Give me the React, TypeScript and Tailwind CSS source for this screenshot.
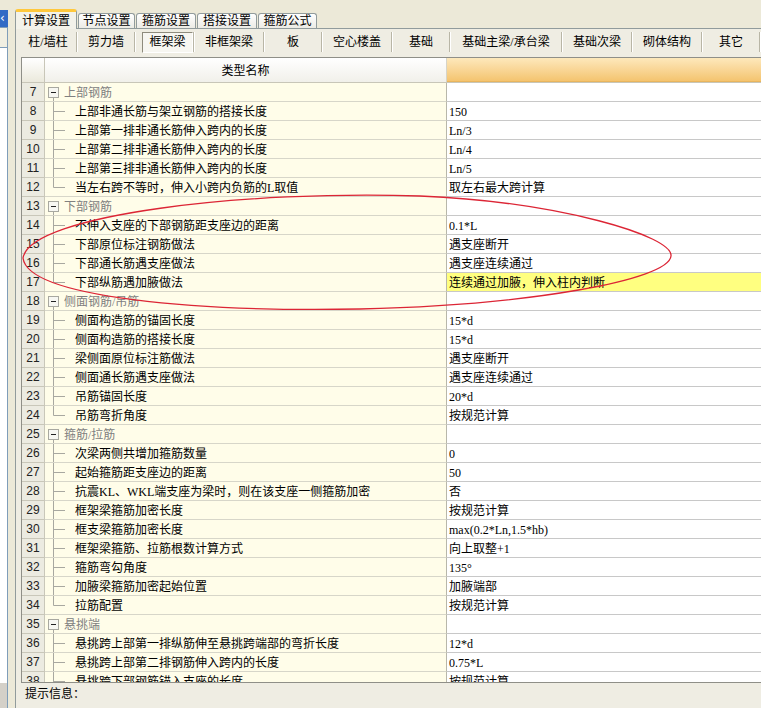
import React from "react";

type Row = { n: number; name: string; v?: string; g?: boolean; hl?: boolean };

const rows: Row[] = [
  { n: 7, name: "上部钢筋", g: true },
  { n: 8, name: "上部非通长筋与架立钢筋的搭接长度", v: "150" },
  { n: 9, name: "上部第一排非通长筋伸入跨内的长度", v: "Ln/3" },
  { n: 10, name: "上部第二排非通长筋伸入跨内的长度", v: "Ln/4" },
  { n: 11, name: "上部第三排非通长筋伸入跨内的长度", v: "Ln/5" },
  { n: 12, name: "当左右跨不等时，伸入小跨内负筋的L取值", v: "取左右最大跨计算" },
  { n: 13, name: "下部钢筋", g: true },
  { n: 14, name: "不伸入支座的下部钢筋距支座边的距离", v: "0.1*L" },
  { n: 15, name: "下部原位标注钢筋做法", v: "遇支座断开" },
  { n: 16, name: "下部通长筋遇支座做法", v: "遇支座连续通过" },
  { n: 17, name: "下部纵筋遇加腋做法", v: "连续通过加腋，伸入柱内判断", hl: true },
  { n: 18, name: "侧面钢筋/吊筋", g: true },
  { n: 19, name: "侧面构造筋的锚固长度", v: "15*d" },
  { n: 20, name: "侧面构造筋的搭接长度", v: "15*d" },
  { n: 21, name: "梁侧面原位标注筋做法", v: "遇支座断开" },
  { n: 22, name: "侧面通长筋遇支座做法", v: "遇支座连续通过" },
  { n: 23, name: "吊筋锚固长度", v: "20*d" },
  { n: 24, name: "吊筋弯折角度", v: "按规范计算" },
  { n: 25, name: "箍筋/拉筋", g: true },
  { n: 26, name: "次梁两侧共增加箍筋数量", v: "0" },
  { n: 27, name: "起始箍筋距支座边的距离", v: "50" },
  { n: 28, name: "抗震KL、WKL端支座为梁时，则在该支座一侧箍筋加密", v: "否" },
  { n: 29, name: "框架梁箍筋加密长度", v: "按规范计算" },
  { n: 30, name: "框支梁箍筋加密长度", v: "max(0.2*Ln,1.5*hb)" },
  { n: 31, name: "框架梁箍筋、拉筋根数计算方式", v: "向上取整+1" },
  { n: 32, name: "箍筋弯勾角度", v: "135°" },
  { n: 33, name: "加腋梁箍筋加密起始位置", v: "加腋端部" },
  { n: 34, name: "拉筋配置", v: "按规范计算" },
  { n: 35, name: "悬挑端", g: true },
  { n: 36, name: "悬挑跨上部第一排纵筋伸至悬挑跨端部的弯折长度", v: "12*d" },
  { n: 37, name: "悬挑跨上部第二排钢筋伸入跨内的长度", v: "0.75*L" },
  { n: 38, name: "悬挑跨下部钢筋锚入支座的长度", v: "按规范计算" },
];

const subTabs: { label: string; w: string; active?: boolean }[] = [
  { label: "柱/墙柱", w: "w-[58px]" },
  { label: "剪力墙", w: "w-[58px]" },
  { label: "框架梁", w: "w-[59px]", active: true },
  { label: "非框架梁", w: "w-[70px]" },
  { label: "板", w: "w-[58px]" },
  { label: "空心楼盖", w: "w-[70px]" },
  { label: "基础", w: "w-[58px]" },
  { label: "基础主梁/承台梁", w: "w-[112px]" },
  { label: "基础次梁", w: "w-[70px]" },
  { label: "砌体结构", w: "w-[70px]" },
  { label: "其它", w: "w-[58px]" },
];

const tabs: { label: string; w: string }[] = [
  { label: "节点设置", w: "w-[57px]" },
  { label: "箍筋设置", w: "w-[60px]" },
  { label: "搭接设置", w: "w-[60px]" },
  { label: "箍筋公式", w: "w-[59px]" },
];

const FONT = '"Liberation Serif","Noto Sans CJK SC",serif';

function GroupIcon() {
  return (
    <svg width="19" height="18" className="shrink-0">
      <rect x="3.5" y="4.5" width="10" height="10" fill="#f7f7f2" stroke="#a8a8a0" />
      <line x1="6" y1="9.5" x2="11" y2="9.5" stroke="#222" />
      <line x1="8.5" y1="15" x2="8.5" y2="18" stroke="#a8a8a0" />
    </svg>
  );
}

function TreeIcon({ last }: { last: boolean }) {
  return (
    <svg width="30" height="18" className="shrink-0">
      <line x1="8.5" y1="0" x2="8.5" y2={last ? 9.5 : 18} stroke="#a8a8a0" />
      <line x1="8.5" y1="9.5" x2="20" y2="9.5" stroke="#a8a8a0" />
    </svg>
  );
}

export default function App() {
  return (
    <div
      className="relative w-[761px] h-[708px] bg-[#ece9d8] flex overflow-hidden text-[12px] text-black"
      style={{ fontFamily: FONT }}
    >
      {/* left strip */}
      <div className="w-[8px] flex flex-col shrink-0">
        <div className="h-[10px]" />
        <div className="h-[17px] bg-[#316ac5] text-white text-[12px] leading-[17px] overflow-hidden" style={{ fontFamily: '"DejaVu Sans",sans-serif' }}>
          ‹
        </div>
        <div className="h-[21px] bg-[#f1efe2] border-y border-r border-[#7f9db9]" />
        <div className="flex-1 bg-white border-r border-[#7f9db9]" />
        <div className="h-[25px] bg-[#d4d0c8] border-r border-[#7f9db9]" />
      </div>
      <div className="w-[7px] shrink-0" />

      {/* main */}
      <div className="flex-1 min-w-0 flex flex-col">
        {/* tabs */}
        <div className="h-[28px] flex items-end shrink-0">
          <div className="relative z-10 -mb-[1px] h-[20px] w-[62px] bg-[#f3f2ea] border-x border-[#919b9c] rounded-t-[3px] border-t-[3px] border-t-[#ffc83c] flex items-center justify-center leading-[14px]">
            计算设置
          </div>
          {tabs.map((t) => (
            <div
              key={t.label}
              className={`${t.w} h-[15px] ml-[1px] bg-linear-to-b from-[#ffffff] to-[#ecebe5] border-x border-t border-[#919b9c] rounded-t-[3px] flex items-center justify-center leading-[14px]`}
            >
              {t.label}
            </div>
          ))}
        </div>

        {/* panel */}
        <div className="flex-1 min-h-0 border-l border-t border-[#919b9c] bg-[#efede3] flex flex-col pl-[5px]">
          {/* sub tabs */}
          <div className="mt-[2px] h-[22px] flex ml-[-1px] shrink-0">
            {subTabs.map((s) => (
              <div key={s.label} className={`${s.w} shrink-0 flex items-center`}>
                {s.active ? (
                  <div className="flex-1 ml-[6px] h-[21px] flex items-center justify-center border border-t-[#8e8b7d] border-l-[#8e8b7d] border-b-white border-r-white bg-[#f7f6f1]">
                    {s.label}
                  </div>
                ) : (
                  <div className="flex-1 text-center leading-[20px] whitespace-nowrap">{s.label}</div>
                )}
                <div className="w-[2px] h-[20px] border-l border-[#b9b6a6] bg-white shrink-0" />
              </div>
            ))}
          </div>

          {/* table */}
          <div className="mt-[4px] h-[626px] shrink-0 border-l border-t border-b border-[#8f8f88] flex flex-col overflow-hidden bg-white">
            {/* header */}
            <div className="h-[25px] flex shrink-0 border-b border-[#c8c6b8]">
              <div className="w-[23px] shrink-0 border-r border-[#c8c6b8] bg-linear-to-b from-[#ffffff] to-[#ebe9dc]" />
              <div className="w-[402px] shrink-0 border-r border-[#d6d4c8] bg-linear-to-b from-[#ffffff] to-[#f1f0ea] flex items-center justify-center pt-[1px]">
                类型名称
              </div>
              <div className="flex-1 bg-linear-to-b from-[#fde8bb] to-[#f4c46f] border-b border-[#e9b55d]" />
            </div>
            {/* body */}
            <div className="flex-1 min-h-0 overflow-hidden">
              {rows.map((r, i) => {
                const next = rows[i + 1];
                const last = !r.g && next !== undefined && !!next.g;
                return (
                  <div key={r.n} className="h-[19px] flex">
                    <div
                      className="w-[23px] shrink-0 bg-[#ecebe1] border-r border-b border-[#c9c7b9] text-center leading-[19px] text-[#222] overflow-hidden"
                      style={{ fontFamily: '"Liberation Sans",sans-serif' }}
                    >
                      {r.n}
                    </div>
                    <div className="w-[402px] shrink-0 bg-[#fffde9] border-r border-b border-[#d7d6c9] border-r-[#b8b7aa] flex items-start whitespace-nowrap overflow-hidden leading-[20px]">
                      {r.g ? (
                        <>
                          <GroupIcon />
                          <span className="text-[#808080]">{r.name}</span>
                        </>
                      ) : (
                        <>
                          <TreeIcon last={last} />
                          <span>{r.name}</span>
                        </>
                      )}
                    </div>
                    <div
                      className={`flex-1 border-b border-[#c8c8c8] pl-[2px] leading-[20px] whitespace-nowrap overflow-hidden ${r.hl ? "bg-[#ffff80]" : "bg-white"}`}
                    >
                      {r.v ?? ""}
                    </div>
                  </div>
                );
              })}
            </div>
          </div>

          {/* info */}
          <div className="h-[25px] shrink-0 pl-[4px] pt-[3px] leading-[16px]">提示信息：</div>
        </div>
      </div>

      {/* red annotation ellipse */}
      <svg className="absolute left-0 top-0 pointer-events-none" width="761" height="708">
        <path
          d="M 23 258 C 30 214, 250 190, 420 196 C 560 202, 673 236, 671 256 C 669 280, 530 305, 360 309 C 200 312, 28 298, 23 258 Z"
          fill="none"
          stroke="#dc2535"
          strokeWidth="1.3"
        />
      </svg>
    </div>
  );
}
